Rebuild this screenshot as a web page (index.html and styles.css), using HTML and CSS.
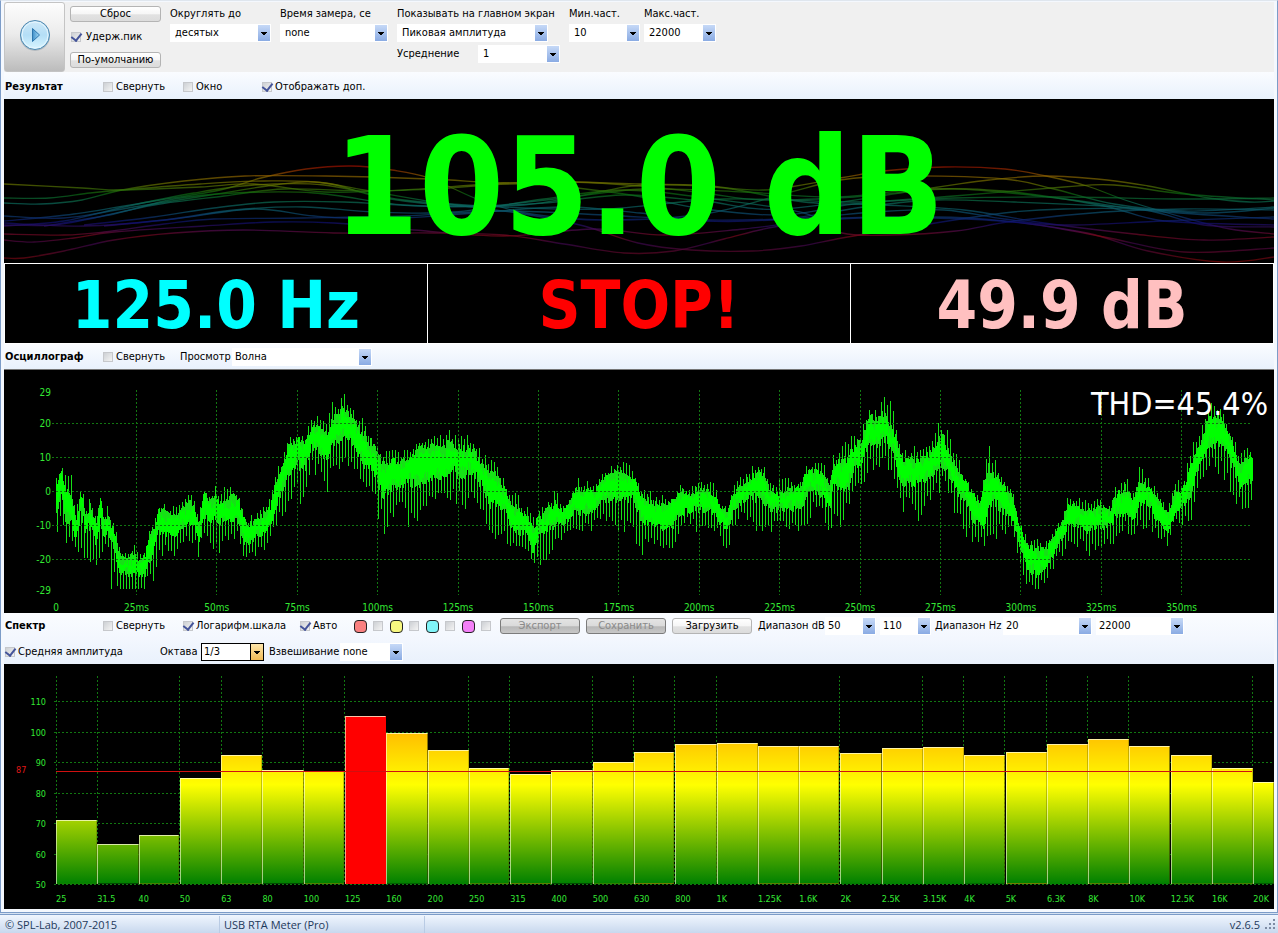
FILE: index.html
```
<!DOCTYPE html>
<html lang="ru">
<head>
  <meta charset="utf-8">
  <title>USB RTA Meter (Pro)</title>
  <link rel="stylesheet" href="styles.css">
</head>
<body>
  <div class="window">
    <div class="toolbar">
      <button class="play" type="button" aria-label="Start">
        <svg width="32" height="32" viewBox="0 0 32 32">
          <defs>
            <linearGradient id="disc" x1="0" y1="0" x2="0" y2="1">
              <stop offset="0" stop-color="#cfe9f8"/>
              <stop offset="0.5" stop-color="#b4def6"/>
              <stop offset="1" stop-color="#d8f6ff"/>
            </linearGradient>
            <linearGradient id="arrow" x1="0" y1="0" x2="1" y2="0">
              <stop offset="0" stop-color="#3f8fc8"/>
              <stop offset="1" stop-color="#a4dcf8"/>
            </linearGradient>
          </defs>
          <circle cx="16" cy="17" r="15" fill="#8f9ba5" opacity="0.5"/>
          <circle cx="16" cy="16" r="14.5" fill="url(#disc)" stroke="#4c86ae"/>
          <circle cx="16" cy="16" r="13" fill="none" stroke="#e6f6fe"/>
          <path d="M13.5 9.5v13l7-6.5z" fill="url(#arrow)" stroke="#2c76ae"/>
        </svg>
      </button>
      <div class="actions">
        <button class="btn" type="button">Сброс</button>
        <label class="check"><input type="checkbox" checked>Удерж.пик</label>
        <button class="btn" type="button">По-умолчанию</button>
      </div>
      <div class="fields">
        <div class="field">
          <label for="round">Округлять до</label>
          <span class="combo"><select id="round"><option>десятых</option></select></span>
        </div>
        <div class="field">
          <label for="time">Время замера, се</label>
          <span class="combo"><select id="time"><option>none</option></select></span>
        </div>
        <div class="field wide">
          <label for="show">Показывать на главном экран</label>
          <span class="combo"><select id="show"><option>Пиковая амплитуда</option></select></span>
          <div class="average">
            <label for="avg">Усреднение</label>
            <span class="combo"><select id="avg"><option>1</option></select></span>
          </div>
        </div>
        <div class="range">
          <div class="field">
            <label for="fmin">Мин.част.</label>
            <span class="combo"><select id="fmin"><option>10</option></select></span>
          </div>
          <div class="field">
            <label for="fmax">Макс.част.</label>
            <span class="combo"><select id="fmax"><option>22000</option></select></span>
          </div>
        </div>
      </div>
    </div>

    <div class="bar bar-result">
      <h2>Результат</h2>
      <label class="check"><input type="checkbox">Свернуть</label>
      <label class="check"><input type="checkbox">Окно</label>
      <label class="check"><input type="checkbox" checked>Отображать доп.</label>
    </div>
    <div class="result">
      <svg class="waves" id="waves" viewBox="0 0 1270 164" preserveAspectRatio="none">
        <defs>
          <linearGradient id="spectrumStroke" gradientUnits="userSpaceOnUse" x1="0" y1="66" x2="0" y2="162">
            <stop offset="0" stop-color="#a00800"/>
            <stop offset="0.12" stop-color="#8a6400"/>
            <stop offset="0.2" stop-color="#6a7400"/>
            <stop offset="0.3" stop-color="#0c6a10"/>
            <stop offset="0.4" stop-color="#0c6c5c"/>
            <stop offset="0.5" stop-color="#0c5070"/>
            <stop offset="0.6" stop-color="#101070"/>
            <stop offset="0.68" stop-color="#500c50"/>
            <stop offset="0.74" stop-color="#7c0818"/>
            <stop offset="0.82" stop-color="#3c0850"/>
            <stop offset="1" stop-color="#7c0808"/>
          </linearGradient>
        </defs>
      </svg>
      <output class="level">105.0 dB</output>
    </div>
    <div class="readouts">
      <output class="freq">125.0 Hz</output>
      <output class="state">STOP!</output>
      <output class="mean">49.9 dB</output>
    </div>

    <div class="bar bar-scope">
      <h2>Осциллограф</h2>
      <label class="check"><input type="checkbox">Свернуть</label>
      <label for="view">Просмотр</label>
      <span class="combo"><select id="view"><option>Волна</option></select></span>
    </div>
    <div class="scope">
      <svg id="scope" width="100%" height="243"></svg>
      <output class="thd">THD=45.4%</output>
    </div>

    <div class="bar bar-spectrum">
      <h2>Спектр</h2>
      <label class="check"><input type="checkbox">Свернуть</label>
      <label class="check"><input type="checkbox" checked>Логарифм.шкала</label>
      <label class="check"><input type="checkbox" checked>Авто</label>
      <div class="traces">
        <button class="swatch red" type="button" aria-label="Red trace"></button>
        <input type="checkbox" aria-label="Show red trace">
        <button class="swatch yellow" type="button" aria-label="Yellow trace"></button>
        <input type="checkbox" aria-label="Show yellow trace">
        <button class="swatch cyan" type="button" aria-label="Cyan trace"></button>
        <input type="checkbox" aria-label="Show cyan trace">
        <button class="swatch pink" type="button" aria-label="Pink trace"></button>
        <input type="checkbox" aria-label="Show pink trace">
      </div>
      <button class="btn" type="button" disabled>Экспорт</button>
      <button class="btn" type="button" disabled>Сохранить</button>
      <button class="btn" type="button">Загрузить</button>
      <label for="dbmin">Диапазон dB</label>
      <span class="combo"><select id="dbmin"><option>50</option></select></span>
      <span class="combo"><select id="dbmax" aria-label="dB max"><option>110</option></select></span>
      <label for="hzmin">Диапазон Hz</label>
      <span class="combo"><select id="hzmin"><option>20</option></select></span>
      <span class="combo"><select id="hzmax" aria-label="Hz max"><option>22000</option></select></span>
    </div>
    <div class="bar bar-octave">
      <label class="check"><input type="checkbox" checked>Средняя амплитуда</label>
      <label for="octave">Октава</label>
      <span class="combo hot"><select id="octave"><option>1/3</option></select></span>
      <label for="weight">Взвешивание</label>
      <span class="combo"><select id="weight"><option>none</option></select></span>
    </div>
    <div class="spectrum">
      <svg id="grid" width="100%" height="245"></svg>
      <div class="bands" id="bands"></div>
      <svg id="marker" width="100%" height="245"></svg>
    </div>
  </div>
  <footer class="status">
    <span>© SPL-Lab, 2007-2015</span>
    <span>USB RTA Meter (Pro)</span>
    <span class="version">v2.6.5</span>
    <svg width="12" height="12" viewBox="0 0 12 12" fill="#7d8ba3">
      <path d="M9 1h2v2h-2zM9 5h2v2h-2zM9 9h2v2h-2zM5 5h2v2h-2zM5 9h2v2h-2zM1 9h2v2h-2z"/>
    </svg>
  </footer>
  <script src="script.js"></script>
</body>
</html>
```
FILE: styles.css
```
:root {
  --ui-font: "DejaVu Sans Condensed", "DejaVu Sans", sans-serif;
  --green: #00ff00;
  --label-green: #33e833;
  --grid: #117711;
  --frame: #7c9cc8;
}
* {
  box-sizing: border-box;
  margin: 0;
}
body {
  background: #d5e2f2;
  color: #000;
  font-family: var(--ui-font);
  font-size: 11px;
  line-height: 14px;
}
button, select, input {
  font: inherit;
  color: inherit;
}
.window {
  padding: 1px 3px 3px;
  border: 1px solid var(--frame);
  border-top-color: #dfe6ee;
  background: #f4f8fe;
}

/* toolbar */
.toolbar {
  display: grid;
  grid-template-columns: 66px 100px 1fr;
  height: 70px;
  background: #f0f0f0;
}
.play {
  display: grid;
  place-items: center;
  width: 61px;
  padding: 0 0 4px;
  border: 1px solid #c4c4c4;
  border-radius: 3px;
  background: linear-gradient(#fdfdfd, #ececec 45%, #bcbcbc);
}
.actions {
  display: flex;
  flex-direction: column;
  justify-content: space-between;
  width: 91px;
  padding: 4px 0;
}
.actions .check {
  padding-left: 1px;
  gap: 5px;
}
.btn {
  height: 16px;
  padding: 0;
  border: 1px solid #b4b4b4;
  border-radius: 3px;
  background: linear-gradient(#fff, #f6f6f6 50%, #e2e2e2 55%, #dcdcdc);
  line-height: 14px;
}
.btn:disabled {
  border-color: #7c7c7c;
  background: linear-gradient(#e4e4e4, #dadada 50%, #b8b8b8 55%, #c8c8c8);
  color: #8a8a8a;
}
.fields {
  display: grid;
  grid-template-columns: 101px 108px 163px 147px;
  column-gap: 9px;
}
.range {
  display: grid;
  grid-template-columns: 71px 72px;
  column-gap: 4px;
}
.field {
  display: flex;
  flex-direction: column;
  padding-top: 5px;
  white-space: nowrap;
}
.field > label {
  height: 17px;
}
.wide > .combo {
  width: 151px;
}
.average {
  display: grid;
  grid-template-columns: 81px 82px;
  align-items: center;
  padding-top: 3px;
}

/* controls */
.check {
  display: flex;
  align-items: center;
  gap: 3px;
}
input[type="checkbox"] {
  appearance: none;
  display: grid;
  grid-template: 100% / 100%;
  place-items: center;
  flex: none;
  width: 10px;
  height: 10px;
  border: 1px solid #c6c8cc;
  background: linear-gradient(135deg, #cdd0d4, #f4f4f4);
}
input[type="checkbox"]:checked::after {
  content: "";
  width: 5px;
  height: 8px;
  border: solid #44549a;
  border-width: 0 2px 2px 0;
  transform: translateY(-1px) rotate(38deg);
}
.combo {
  display: grid;
  grid-template-columns: 1fr 14px;
  height: 18px;
  background: #fff;
}
.combo select {
  appearance: none;
  grid-area: 1 / 1 / 2 / 3;
  width: 100%;
  height: 18px;
  padding: 0 18px 0 4px;
  border: 1px solid #fff;
  border-radius: 0;
  background: transparent;
}
.combo::after {
  content: "";
  grid-area: 1 / 2;
  width: 12px;
  height: 16px;
  margin: 1px;
  background:
    linear-gradient(#000, #000) 3px 7px / 6px 1px no-repeat,
    linear-gradient(#000, #000) 4px 8px / 4px 1px no-repeat,
    linear-gradient(#000, #000) 5px 9px / 2px 1px no-repeat,
    linear-gradient(#c6d9f7, #8aabe3);
  pointer-events: none;
}
.bar .combo select {
  padding-left: 2px;
}
.combo.hot select {
  border-color: #000;
}
.combo.hot::after {
  background:
    linear-gradient(#000, #000) 3px 7px / 6px 1px no-repeat,
    linear-gradient(#000, #000) 4px 8px / 4px 1px no-repeat,
    linear-gradient(#000, #000) 5px 9px / 2px 1px no-repeat,
    linear-gradient(#fde6ac, #f1bb55);
  outline: 1px solid #000;
}

/* section bars */
.bar {
  display: grid;
  align-items: center;
  height: 26px;
  padding-left: 1px;
  background: linear-gradient(#fafcff, #e9f1fc);
  white-space: nowrap;
}
.bar h2 {
  font-size: 11px;
  font-weight: bold;
}
.bar-result {
  grid-template-columns: 98px 80px 79px auto;
  height: 27px;
  padding-top: 2px;
}
.bar-scope {
  grid-template-columns: 98px 77px 52px 140px;
  height: 25px;
}
.bar-spectrum {
  grid-template-columns: 98px 80px 117px 54px 146px 86px 86px 86px 67px 55px 55px 68px 93px 92px;
  background: linear-gradient(#fafcff, #f3f7fe);
}
.bar-spectrum .btn {
  margin-right: 6px;
}
.bar-spectrum .combo {
  margin-right: 4px;
}
.bar-octave {
  grid-template-columns: 155px 41px 68px 71px 63px;
  height: 25px;
  background: linear-gradient(#f3f7fe, #e9f1fc);
}
.combo.hot {
  width: 63px;
}
.traces {
  display: flex;
  align-items: center;
}
.traces input {
  margin: 0 7px 0 6px;
}
.swatch {
  width: 13px;
  height: 13px;
  padding: 0;
  border: 1px solid #222;
  border-radius: 4px;
}
.swatch.red { background: #f98080; }
.swatch.yellow { background: #f8f880; }
.swatch.cyan { background: #80f4f8; }
.swatch.pink { background: #f480f8; }

/* result */
.result {
  display: grid;
  height: 164px;
  background: #000;
}
.waves {
  grid-area: 1 / 1;
  width: 100%;
  height: 164px;
}
.level {
  grid-area: 1 / 1;
  place-self: end center;
  color: var(--green);
  font-size: 136px;
  font-weight: bold;
  line-height: 152px;
}
.readouts {
  display: grid;
  grid-template-columns: repeat(3, 1fr);
  gap: 1px;
  height: 81px;
  padding: 1px;
  background: #fff;
  font-size: 65px;
  font-weight: bold;
  line-height: 84px;
  text-align: center;
}
.readouts output {
  height: 79px;
  background: #000;
}
.freq { color: #00ffff; }
.state { color: #ff0000; }
.mean { color: #ffc0c0; }

/* charts */
.scope {
  display: grid;
  height: 244px;
  border-top: 1px solid #777;
  background: #000;
}
.scope svg {
  grid-area: 1 / 1;
}
.thd {
  grid-area: 1 / 1;
  justify-self: end;
  padding: 14px 6px 0 0;
  color: #fff;
  font-size: 32px;
  line-height: 40px;
}
svg text {
  fill: var(--label-green);
  font-size: 10px;
}
.grid-line {
  stroke: var(--grid);
  stroke-dasharray: 2 2;
  shape-rendering: crispEdges;
}
.spectrum {
  display: grid;
  height: 245px;
  overflow: hidden;
  background: #000;
  font-size: 9px;
}
.spectrum svg,
.bands {
  grid-area: 1 / 1;
}
.spectrum svg text {
  font-size: 9px;
}
#marker .mean-label {
  fill: #e01818;
}
#marker {
  position: relative;
  pointer-events: none;
}
.bands {
  display: grid;
  grid-template-columns: repeat(29, minmax(0, 2fr)) minmax(0, 1fr);
  grid-template-rows: 208px 25px;
  padding: 12px 0 0 52px;
}
.band {
  align-self: end;
  border: solid;
  border-width: 1px 1px 0 1px;
  border-color: rgba(255, 255, 220, 0.75) rgba(90, 90, 0, 0.35) transparent rgba(255, 255, 220, 0.6);
  background: linear-gradient(#ff7700, #ffff00 109px, #008000 208px) bottom / 100% 208px border-box;
}
.band:nth-of-type(4n + 3) {
  margin-right: 1px;
}
.band.peak {
  border-right-color: transparent;
  background: #ff0000;
}
.band-name {
  grid-row: 2;
  color: var(--label-green);
  line-height: 30px;
  white-space: nowrap;
}

/* status bar */
.status {
  display: grid;
  grid-template-columns: 215px 201px 1fr 12px;
  align-items: center;
  column-gap: 4px;
  height: 19px;
  margin-top: 1px;
  padding: 0 2px 0 5px;
  border-top: 1px solid var(--frame);
  background: linear-gradient(#f0f6fe, #c8d8ee);
  color: #1e395b;
  font-family: "Open Sans", "Noto Sans", sans-serif;
  font-size: 11px;
  line-height: 17px;
}
.status span:nth-child(-n + 2) {
  border-right: 1px solid #b9cbe4;
}
.version {
  text-align: right;
}
```
FILE: script.js
```
const NS = 'http://www.w3.org/2000/svg';

function add(parent, tag, attrs, text) {
  const el = document.createElementNS(NS, tag);
  for (const key in attrs) el.setAttribute(key, attrs[key]);
  if (text !== undefined) el.textContent = text;
  parent.appendChild(el);
  return el;
}

const pct = (x) => (x / 1270 * 100) + '%';

// background curves behind the main level
const curves = [
  [0,85, 78,89, 118,91, 196,88, 250,85, 320,93, 400,91, 500,84, 567,83, 636,87, 700,94, 760,101, 850,98, 950,90, 1060,100, 1150,112, 1270,120],
  [0,122, 70,115, 150,102, 216,91, 257,79, 302,70, 347,67, 388,71, 425,79, 478,102, 527,115, 600,121, 700,115, 780,95, 836,81, 900,77, 1000,80, 1050,90, 1110,105, 1180,112, 1270,108],
  [0,104, 37,105, 78,101, 118,91, 180,82, 241,77, 322,77, 425,80, 500,84, 567,83, 636,85, 695,86, 760,91, 836,79, 879,72, 940,68, 1001,70, 1042,77, 1083,87, 1124,102, 1185,120, 1226,130, 1270,135],
  [0,99, 45,99, 86,94, 118,91, 196,85, 260,82, 322,84, 380,99, 460,107, 540,104, 620,96, 700,102, 780,110, 928,89, 985,81, 1042,77, 1103,81, 1144,87, 1205,99, 1246,103, 1270,102],
  [0,127, 60,122, 120,108, 190,94, 250,86, 320,86, 400,101, 500,108, 600,110, 720,100, 850,103, 950,99, 1060,98, 1180,100, 1270,99],
  [0,126, 50,126, 90,119, 150,106, 220,97, 280,90, 360,92, 430,90, 520,85, 620,95, 700,110, 780,116, 850,105, 950,97, 1060,88, 1110,86, 1180,95, 1270,101],
  [40,127, 110,115, 170,100, 230,94, 310,94, 400,106, 480,107, 560,99, 640,90, 740,93, 830,98, 920,90, 1000,92, 1100,107, 1160,122, 1270,126],
  [80,126, 150,118, 210,109, 270,103, 340,103, 420,107, 520,106, 600,92, 640,86, 720,89, 800,103, 880,106, 960,111, 1040,124, 1130,135, 1200,141, 1270,138],
  [100,127, 170,120, 250,110, 310,117, 380,120, 470,114, 560,108, 636,114, 700,122, 780,120, 860,108, 930,101, 1010,103, 1100,107, 1200,114, 1270,109],
  [0,135, 60,136, 100,133, 160,125, 210,120, 300,119, 400,117, 500,112, 600,116, 700,121, 800,119, 870,113, 940,111, 1000,120, 1060,126, 1160,122, 1270,118],
  [0,141, 30,143, 70,139, 110,133, 200,127, 270,123, 330,124, 410,131, 500,137, 590,130, 660,136, 740,130, 820,121, 930,118, 1000,122, 1083,134, 1144,152, 1218,163, 1270,158],
  [0,159, 20,159, 60,152, 110,141, 170,134, 240,131, 330,134, 430,134, 500,136, 560,145, 620,154, 670,152, 720,140, 770,128, 840,119, 930,119, 1020,124, 1100,138, 1180,153, 1270,149],
  [0,124, 80,127, 160,121, 230,111, 300,108, 370,113, 450,113, 540,100, 620,91, 710,100, 800,114, 838,134, 887,136, 952,132, 1010,122, 1100,113, 1180,110, 1270,111],
  [0,117, 60,119, 130,108, 200,97, 270,86, 310,83, 360,91, 430,103, 520,115, 580,127, 634,144, 687,151, 748,152, 797,147, 838,139, 900,129, 1000,114, 1060,110, 1140,111, 1200,126, 1270,128]
];

function smooth(c) {
  let d = `M${c[0]} ${c[1]}`;
  for (let i = 0; i + 3 < c.length; i += 2) {
    const p = i ? i - 2 : i;
    const n = i + 5 < c.length ? i + 4 : i + 2;
    d += `C${c[i] + (c[i + 2] - c[p]) / 6} ${c[i + 1] + (c[i + 3] - c[p + 1]) / 6} `
      + `${c[i + 2] - (c[n] - c[i]) / 6} ${c[i + 3] - (c[n + 1] - c[i + 1]) / 6} ${c[i + 2]} ${c[i + 3]}`;
  }
  return d;
}

curves.forEach((c) => add(document.getElementById('waves'), 'path', {
  d: smooth(c), fill: 'none', stroke: 'url(#spectrumStroke)', 'stroke-width': 1.3, opacity: 0.7
}));

// oscilloscope envelope: x, highest peak, body top, body bottom, lowest dip
const envelope = [
  [170,420,450,510,605],[185,378,395,450,510],[195,400,460,520,615],[215,420,480,530,600],[228,520,550,600,635],
  [243,430,480,500,610],[258,510,530,550,645],[272,470,510,540,640],[288,540,560,590,675],[302,460,480,530,650],
  [312,530,550,570,640],[325,500,530,560,620],[335,540,570,590,740],[345,560,600,620,700],[358,620,650,680,748],
  [378,640,670,690,748],[398,610,665,700,748],[415,640,665,690,748],[435,650,660,700,748],[447,570,610,660,700],
  [460,540,580,620,730],[475,510,530,570,635],[490,490,520,560,635],[510,510,530,575,630],[530,500,530,575,655],
  [550,480,510,545,600],[565,455,490,530,600],[580,470,500,540,600],[597,530,560,590,655],[612,445,470,520,570],
  [635,465,490,530,615],[645,440,480,520,600],[655,470,500,540,630],[675,445,490,525,590],[698,430,480,525,580],
  [715,460,490,530,600],[733,520,550,600,665],[745,530,570,610,640],[770,520,545,580,640],[795,500,530,570,620],
  [812,480,510,550,590],[825,400,440,490,560],[845,370,400,440,530],[865,300,330,390,480],[890,280,310,355,470],
  [915,290,320,365,460],[935,235,270,310,380],[960,235,275,320,400],[985,250,290,340,440],[995,190,250,305,360],
  [1015,200,245,285,380],[1035,155,215,270,350],[1050,200,235,275,370],[1070,230,260,310,400],[1090,250,300,350,450],
  [1110,270,320,370,450],[1130,310,345,390,500],[1150,350,385,440,570],[1180,330,370,430,530],[1200,340,380,420,500],
  [1230,330,360,410,540],[1260,300,335,410,510],[1300,295,330,395,480],[1330,295,340,400,460],[1350,270,320,370,470],
  [1375,290,335,380,490],[1400,290,340,380,490],[1425,305,350,390,470],[1445,345,390,420,520],[1470,355,410,480,560],
  [1490,380,420,475,580],[1510,420,450,490,570],[1530,470,490,540,610],[1550,470,520,570,630],[1570,500,530,565,650],
  [1585,510,540,580,640],[1600,540,570,630,680],[1620,510,540,570,660],[1645,480,520,550,660],[1670,460,500,535,610],
  [1690,500,520,545,600],[1710,470,490,520,570],[1730,420,455,500,570],[1760,430,465,510,570],[1785,440,460,500,550],
  [1805,410,425,465,540],[1840,380,405,455,560],[1875,370,400,450,550],[1905,400,435,470,570],[1920,430,470,520,640],
  [1950,460,500,540,610],[1990,470,500,555,620],[2020,480,490,545,610],[2045,435,455,500,560],[2070,450,475,500,540],
  [2090,420,460,495,570],[2120,430,465,505,570],[2145,440,475,510,560],[2160,490,510,540,600],[2185,490,520,550,630],
  [2200,440,470,500,560],[2230,410,440,470,530],[2260,380,420,460,540],[2285,370,405,455,580],[2310,430,460,495,570],
  [2335,430,470,500,560],[2365,420,460,490,570],[2400,430,450,490,570],[2420,380,410,450,550],[2440,365,400,435,510],
  [2470,380,420,460,520],[2490,410,450,490,570],[2500,355,390,430,510],[2519,330,375,430,540],[2544,310,370,430,510],
  [2564,290,330,370,430],[2584,280,320,360,440],[2609,205,240,290,370],[2634,215,250,300,370],[2657,165,240,280,370],
  [2679,220,280,320,390],[2699,310,350,410,460],[2709,340,375,430,500],[2729,330,370,415,480],[2759,330,370,420,530],
  [2789,320,355,400,480],[2809,260,320,370,450],[2829,260,310,365,430],[2849,290,350,390,470],[2874,360,400,440,520],
  [2899,410,440,480,590],[2924,460,480,530,600],[2942,480,500,540,590],[2954,390,430,560,615],[2966,325,410,470,560],
  [2994,390,420,480,580],[3014,430,450,500,590],[3039,450,480,530,560],[3059,560,570,610,680],[3084,600,630,680,748],
  [3114,600,640,690,748],[3139,610,635,670,720],[3164,560,590,620,670],[3184,540,560,590,650],[3204,475,500,540,600],
  [3234,480,510,550,610],[3264,490,520,560,640],[3304,480,510,550,610],[3329,500,520,545,610],[3344,450,480,520,590],
  [3379,410,455,500,560],[3399,470,490,540,590],[3419,385,440,480,550],[3444,420,450,480,550],[3474,460,480,530,590],
  [3504,510,530,570,610],[3524,430,470,510,550],[3549,430,460,490,550],[3574,330,380,440,540],[3599,290,320,360,430],
  [3629,190,250,305,370],[3659,210,240,290,390],[3679,240,270,320,410],[3699,290,330,370,460],[3719,350,390,420,490],
  [3739,330,360,410,510],[3754,340,360,420,470]
];

const scope = document.getElementById('scope');
const trace = add(scope, 'svg', {
  width: '100%', height: 243, viewBox: '12 90 3810 729', preserveAspectRatio: 'none'
});

let seed = 7;
function rnd() {
  seed = (seed * 16807) % 2147483647;
  return seed / 2147483647;
}

let body = '';
let spikes = '';
let k = 0;
let drift = 0;
for (let x = 169.5, n = 0; x <= 3758; x += 3, n++) {
  while (k < envelope.length - 2 && envelope[k + 1][0] < x) k++;
  const a = envelope[k];
  const b = envelope[k + 1];
  const t = Math.min(1, Math.max(0, (x - a[0]) / (b[0] - a[0])));
  const [hi, top, bottom, lo] = [1, 2, 3, 4].map((i) => a[i] + (b[i] - a[i]) * t);
  if (n % 4 === 0) drift = rnd() * 28 - 14;
  const up = n % 3 === 0 ? 0.5 + rnd() * 0.8 : rnd() * 0.6;
  const down = n % 3 === 1 ? 0.65 + rnd() * 0.6 : rnd() * 0.35;
  const low = Math.min(748, bottom + (lo - bottom) * down);
  body += `M${x} ${top + drift + rnd() * 24 - 12}V${Math.min(744, bottom + drift + rnd() * 24 - 8)}`;
  spikes += `M${x} ${top - (top - hi) * up}V${low}`;
}
add(trace, 'path', { d: spikes, stroke: '#16e016', 'stroke-width': 3, 'shape-rendering': 'crispEdges' });
add(trace, 'path', { d: body, stroke: '#00ff00', 'stroke-width': 3, 'shape-rendering': 'crispEdges' });

[[29, 22], [20, 53], [10, 87], [0, 121], [-10, 155], [-20, 189], [-29, 220]].forEach(([v, y]) => {
  add(scope, 'text', { x: pct(47), y: y + 4, 'text-anchor': 'end' }, v);
  if (Math.abs(v) !== 29) {
    add(scope, 'line', { class: 'grid-line', x1: pct(48), x2: pct(1248), y1: y, y2: y });
  }
});
for (let i = 0; i < 15; i++) {
  const x = pct(52 + i * 80.4);
  add(scope, 'text', { x, y: 241, 'text-anchor': 'middle' }, i ? i * 25 + 'ms' : '0');
  if (i) add(scope, 'line', { class: 'grid-line', x1: x, x2: x, y1: 20, y2: 225 });
}

// third-octave bands: name, level in dB, grid line
const bands = [
  ['25', 71, 1], ['31.5', 63, 1], ['40', 66, 0], ['50', 84.8, 1], ['63', 92.3, 1], ['80', 87.3, 1],
  ['100', 87, 1], ['125', 105.2, 1], ['160', 99.5, 0], ['200', 94, 0], ['250', 88, 1], ['315', 86, 1],
  ['400', 87.3, 0], ['500', 90, 1], ['630', 93.2, 1], ['800', 96, 1], ['1K', 96.3, 1], ['1.25K', 95.2, 0],
  ['1.6K', 95.2, 0], ['2K', 93, 1], ['2.5K', 94.7, 0], ['3.15K', 95, 1], ['4K', 92.3, 1], ['5K', 93.2, 1],
  ['6.3K', 96, 1], ['8K', 97.5, 1], ['10K', 95.3, 1], ['12.5K', 92.3, 0], ['16K', 88, 0], ['20K', 83.4, 1]
];
const MIN_DB = 50;
const RANGE_DB = 68.3;
const dbToY = (db) => Math.round(220 - (db - MIN_DB) / RANGE_DB * 208);

const grid = document.getElementById('grid');
for (let db = 50; db <= 110; db += 10) {
  const y = dbToY(db);
  add(grid, 'line', { class: 'grid-line', x1: pct(50), x2: '100%', y1: y, y2: y });
  add(grid, 'text', { x: pct(42), y: y + 4, 'text-anchor': 'end' }, db);
}

const bandBox = document.getElementById('bands');
const peak = Math.max(...bands.map((b) => b[1]));
bands.forEach(([, level, line], i) => {
  const bar = document.createElement('div');
  bar.className = level === peak ? 'band peak' : 'band';
  bar.style.height = (level - MIN_DB) / RANGE_DB * 100 + '%';
  bandBox.appendChild(bar);
  if (line) {
    const x = pct(52 + i * 41.25);
    add(grid, 'line', { class: 'grid-line', x1: x, x2: x, y1: 12, y2: 220 });
  }
});
bands.forEach(([name]) => {
  const label = document.createElement('span');
  label.className = 'band-name';
  label.textContent = name;
  bandBox.appendChild(label);
});

const marker = document.getElementById('marker');
const meanY = dbToY(87);
add(marker, 'rect', { x: pct(52), y: meanY, width: pct(1196), height: 1, fill: '#d01010' });
add(marker, 'text', { class: 'mean-label', x: pct(12), y: meanY + 2 }, '87');
```
